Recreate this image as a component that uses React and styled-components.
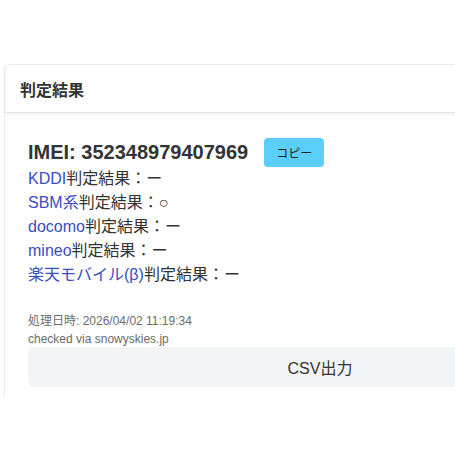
import React from "react";
import styled, { createGlobalStyle } from "styled-components";

const Global = createGlobalStyle`
  html, body { margin: 0; padding: 0; background: #fff; overflow: hidden; }
  body { font-family: "Liberation Sans", "Noto Sans CJK JP", sans-serif; color: #333; }
`;

const Page = styled.div`
  padding: 64px 0 0 4px;
  height: 333px;
  overflow: hidden;
`;

const Card = styled.section`
  width: 640px;
  border: 1px solid #ececec;
  border-bottom: none;
  border-radius: 8px 8px 0 0;
  background: #fff;
  height: 340px;
`;

const Header = styled.header`
  height: 47px;
  display: flex;
  align-items: center;
  padding-left: 15px;
  border-bottom: 1px solid #e6e6e6;
  box-shadow: 0 1px 3px rgba(0, 0, 0, 0.08);
`;

const Title = styled.h2`
  margin: 0;
  font-size: 16px;
  font-weight: 700;
  color: #333;
`;

const Body = styled.div`
  padding: 25px 0 10px 23px;
  display: flex;
  flex-direction: column;
`;

const ImeiRow = styled.div`
  display: flex;
  align-items: center;
  gap: 16px;
  height: 29px;
`;

const Imei = styled.span`
  font-size: 20px;
  font-weight: 700;
  color: #333;
`;

const CopyButton = styled.button`
  width: 60px;
  height: 29px;
  border: none;
  border-radius: 4px;
  background: #5bcefa;
  color: #222;
  font-family: inherit;
  font-size: 12px;
  padding: 0;
`;

const Results = styled.div`
  display: flex;
  flex-direction: column;
`;

const ResultLine = styled.div`
  font-size: 16px;
  line-height: 24px;
  color: #333;
`;

const Carrier = styled.a`
  color: #3a4ec0;
  text-decoration: none;
`;

const Meta = styled.div`
  margin-top: 25px;
  font-size: 12px;
  line-height: 18px;
  color: #6b6b6b;
`;

const CsvButton = styled.button`
  width: 584px;
  height: 40px;
  margin-top: -1px;
  border: none;
  border-radius: 6px;
  background: #f3f4f6;
  color: #333;
  font-family: inherit;
  font-size: 16px;
  padding: 0;
`;

const carriers = [
  { name: "KDDI", result: "ー" },
  { name: "SBM系", result: "○" },
  { name: "docomo", result: "ー" },
  { name: "mineo", result: "ー" },
  { name: "楽天モバイル(β)", result: "ー" },
];

export default function App() {
  return (
    <>
      <Global />
      <Page>
        <Card>
          <Header>
            <Title>判定結果</Title>
          </Header>
          <Body>
            <ImeiRow>
              <Imei>IMEI: 352348979407969</Imei>
              <CopyButton>コピー</CopyButton>
            </ImeiRow>
            <Results>
              {carriers.map((c) => (
                <ResultLine key={c.name}>
                  <Carrier href="#">{c.name}</Carrier>判定結果：{c.result}
                </ResultLine>
              ))}
            </Results>
            <Meta>
              処理日時: 2026/04/02 11:19:34
              <br />
              checked via snowyskies.jp
            </Meta>
            <CsvButton>CSV出力</CsvButton>
          </Body>
        </Card>
      </Page>
    </>
  );
}
